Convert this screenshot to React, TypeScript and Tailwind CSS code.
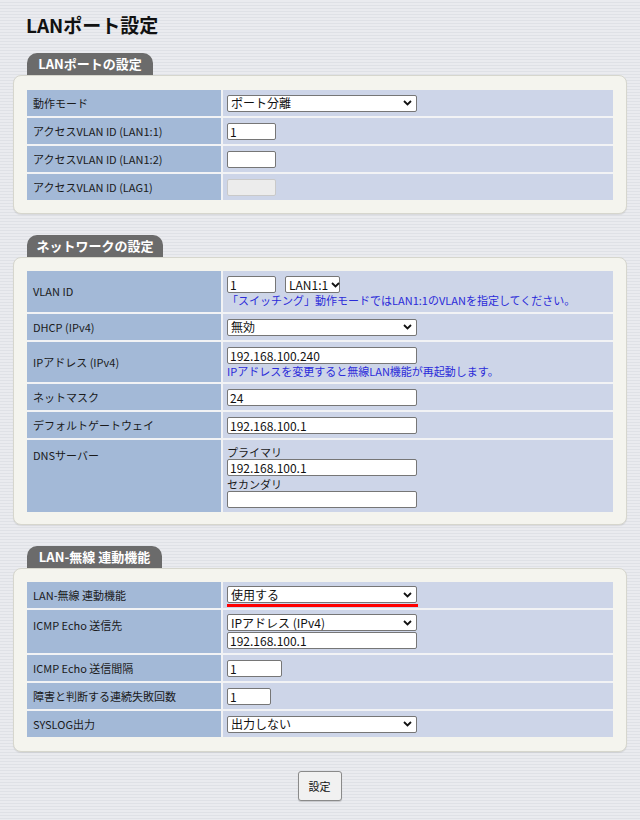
import React from "react";

const FONT = "font-['Noto_Sans_CJK_JP','Liberation_Sans',sans-serif]";

function Chevron() {
  return (
    <svg width="9" height="6" viewBox="0 0 9 6" className="shrink-0">
      <path d="M1 1 L4.5 4.5 L8 1" fill="none" stroke="#111" strokeWidth="1.8" />
    </svg>
  );
}

function Sel({ text, w }: { text: string; w: string }) {
  return (
    <div
      className={`${w} h-[17px] border border-[#767676] rounded-[2px] bg-white flex items-center justify-between gap-[3px] pl-[3px] pr-[4px] text-[12px] leading-none text-[#111]`}
    >
      <span className="whitespace-nowrap">{text}</span>
      <Chevron />
    </div>
  );
}

function Inp({ value, w, disabled }: { value?: string; w: string; disabled?: boolean }) {
  return (
    <input
      readOnly
      disabled={disabled}
      value={value ?? ""}
      className={`${w} h-[17px] border rounded-[2px] px-[2px] text-[12px] leading-none text-[#111] outline-none ${
        disabled ? "bg-[#ececec] border-[#c9c9c9]" : "bg-white border-[#767676]"
      }`}
    />
  );
}

function Row({
  label,
  h,
  top,
  children,
}: {
  label: string;
  h: string;
  top?: boolean;
  children: React.ReactNode;
}) {
  return (
    <>
      <div
        className={`bg-[#a3b9d7] ${h} px-[6px] flex ${top ? "items-start pt-[7px]" : "items-center"} text-[11px] text-[#1a1a1a]`}
      >
        {label}
      </div>
      <div className={`bg-[#cdd5e8] ${h} px-[4px] flex flex-col justify-center`}>{children}</div>
    </>
  );
}

function Section({
  title,
  tabW,
  pad,
  children,
}: {
  title: string;
  tabW: string;
  pad: string;
  children: React.ReactNode;
}) {
  return (
    <div className="ml-[13px] w-[614px]">
      <div
        className={`ml-[14px] ${tabW} h-[22px] bg-[#6b6b6b] rounded-t-[10px] flex items-center justify-center text-white font-bold text-[13px]`}
      >
        {title}
      </div>
      <div
        className={`bg-[#f4f4ee] border border-[#d6d6cd] rounded-[8px] px-[13px] ${pad} shadow-[0_1px_1px_rgba(0,0,0,0.08)]`}
      >
        <div className="grid grid-cols-[194px_1fr] gap-[2px] bg-[#f2f3f5]">{children}</div>
      </div>
    </div>
  );
}

export default function App() {
  return (
    <div
      className={`${FONT} w-[640px] min-h-[820px] bg-[#e7e8ec] bg-[image:repeating-linear-gradient(to_bottom,#eaebef_0px,#eaebef_2px,#dfe1e6_2px,#dfe1e6_3px)] pt-[12px] pb-[18px]`}
    >
      <h1 className="ml-[26px] text-[19px] font-bold text-[#111] leading-[26px]">LANポート設定</h1>

      <div className="mt-[15px]">
        <Section title="LANポートの設定" tabW="w-[126px]" pad="pt-[14px] pb-[13px]">
          <Row label="動作モード" h="h-[26px]">
            <Sel text="ポート分離" w="w-[190px]" />
          </Row>
          <Row label="アクセスVLAN ID (LAN1:1)" h="h-[26px]">
            <Inp value="1" w="w-[49px]" />
          </Row>
          <Row label="アクセスVLAN ID (LAN1:2)" h="h-[26px]">
            <Inp w="w-[49px]" />
          </Row>
          <Row label="アクセスVLAN ID (LAG1)" h="h-[26px]">
            <Inp w="w-[49px]" disabled />
          </Row>
        </Section>
      </div>

      <div className="mt-[21px]">
        <Section title="ネットワークの設定" tabW="w-[136px]" pad="pt-[13px] pb-[12px]">
          <Row label="VLAN ID" h="h-[41px]">
            <div className="flex items-center gap-[9px]">
              <Inp value="1" w="w-[49px]" />
              <Sel text="LAN1:1" w="w-[55px]" />
            </div>
            <div className="text-[11px] text-[#2b2bd9] leading-[13px] mt-[1px]">
              「スイッチング」動作モードではLAN1:1のVLANを指定してください。
            </div>
          </Row>
          <Row label="DHCP (IPv4)" h="h-[26px]">
            <Sel text="無効" w="w-[190px]" />
          </Row>
          <Row label="IPアドレス (IPv4)" h="h-[40px]">
            <Inp value="192.168.100.240" w="w-[190px]" />
            <div className="text-[11px] text-[#2b2bd9] leading-[13px] mt-[1px]">
              IPアドレスを変更すると無線LAN機能が再起動します。
            </div>
          </Row>
          <Row label="ネットマスク" h="h-[26px]">
            <Inp value="24" w="w-[190px]" />
          </Row>
          <Row label="デフォルトゲートウェイ" h="h-[26px]">
            <Inp value="192.168.100.1" w="w-[190px]" />
          </Row>
          <Row label="DNSサーバー" h="h-[72px]" top>
            <div className="text-[11px] leading-[14px] text-[#1a1a1a]">プライマリ</div>
            <Inp value="192.168.100.1" w="w-[190px]" />
            <div className="text-[11px] leading-[14px] mt-[1px] text-[#1a1a1a]">セカンダリ</div>
            <Inp w="w-[190px]" />
          </Row>
        </Section>
      </div>

      <div className="mt-[21px]">
        <Section title="LAN-無線 連動機能" tabW="w-[135px]" pad="pt-[13px] pb-[14px]">
          <Row label="LAN-無線 連動機能" h="h-[26px]">
            <div className="pt-[3px]">
              <Sel text="使用する" w="w-[190px]" />
              <div className="w-[191px] h-[3px] bg-[#ff0000] mt-[1px]" />
            </div>
          </Row>
          <Row label="ICMP Echo 送信先" h="h-[43px]" top>
            <div className="flex flex-col gap-[1px]">
              <Sel text="IPアドレス (IPv4)" w="w-[190px]" />
              <Inp value="192.168.100.1" w="w-[190px]" />
            </div>
          </Row>
          <Row label="ICMP Echo 送信間隔" h="h-[26px]">
            <Inp value="1" w="w-[55px]" />
          </Row>
          <Row label="障害と判断する連続失敗回数" h="h-[26px]">
            <Inp value="1" w="w-[44px]" />
          </Row>
          <Row label="SYSLOG出力" h="h-[26px]">
            <Sel text="出力しない" w="w-[190px]" />
          </Row>
        </Section>
      </div>

      <div className="flex justify-center mt-[19px] pr-[1px]">
        <button className="w-[44px] h-[30px] border border-[#8a8a8a] rounded-[3px] bg-[#f1f1f1] text-[11px] text-[#111] shadow-[0_1px_1px_rgba(0,0,0,0.15)]">
          設定
        </button>
      </div>
    </div>
  );
}
